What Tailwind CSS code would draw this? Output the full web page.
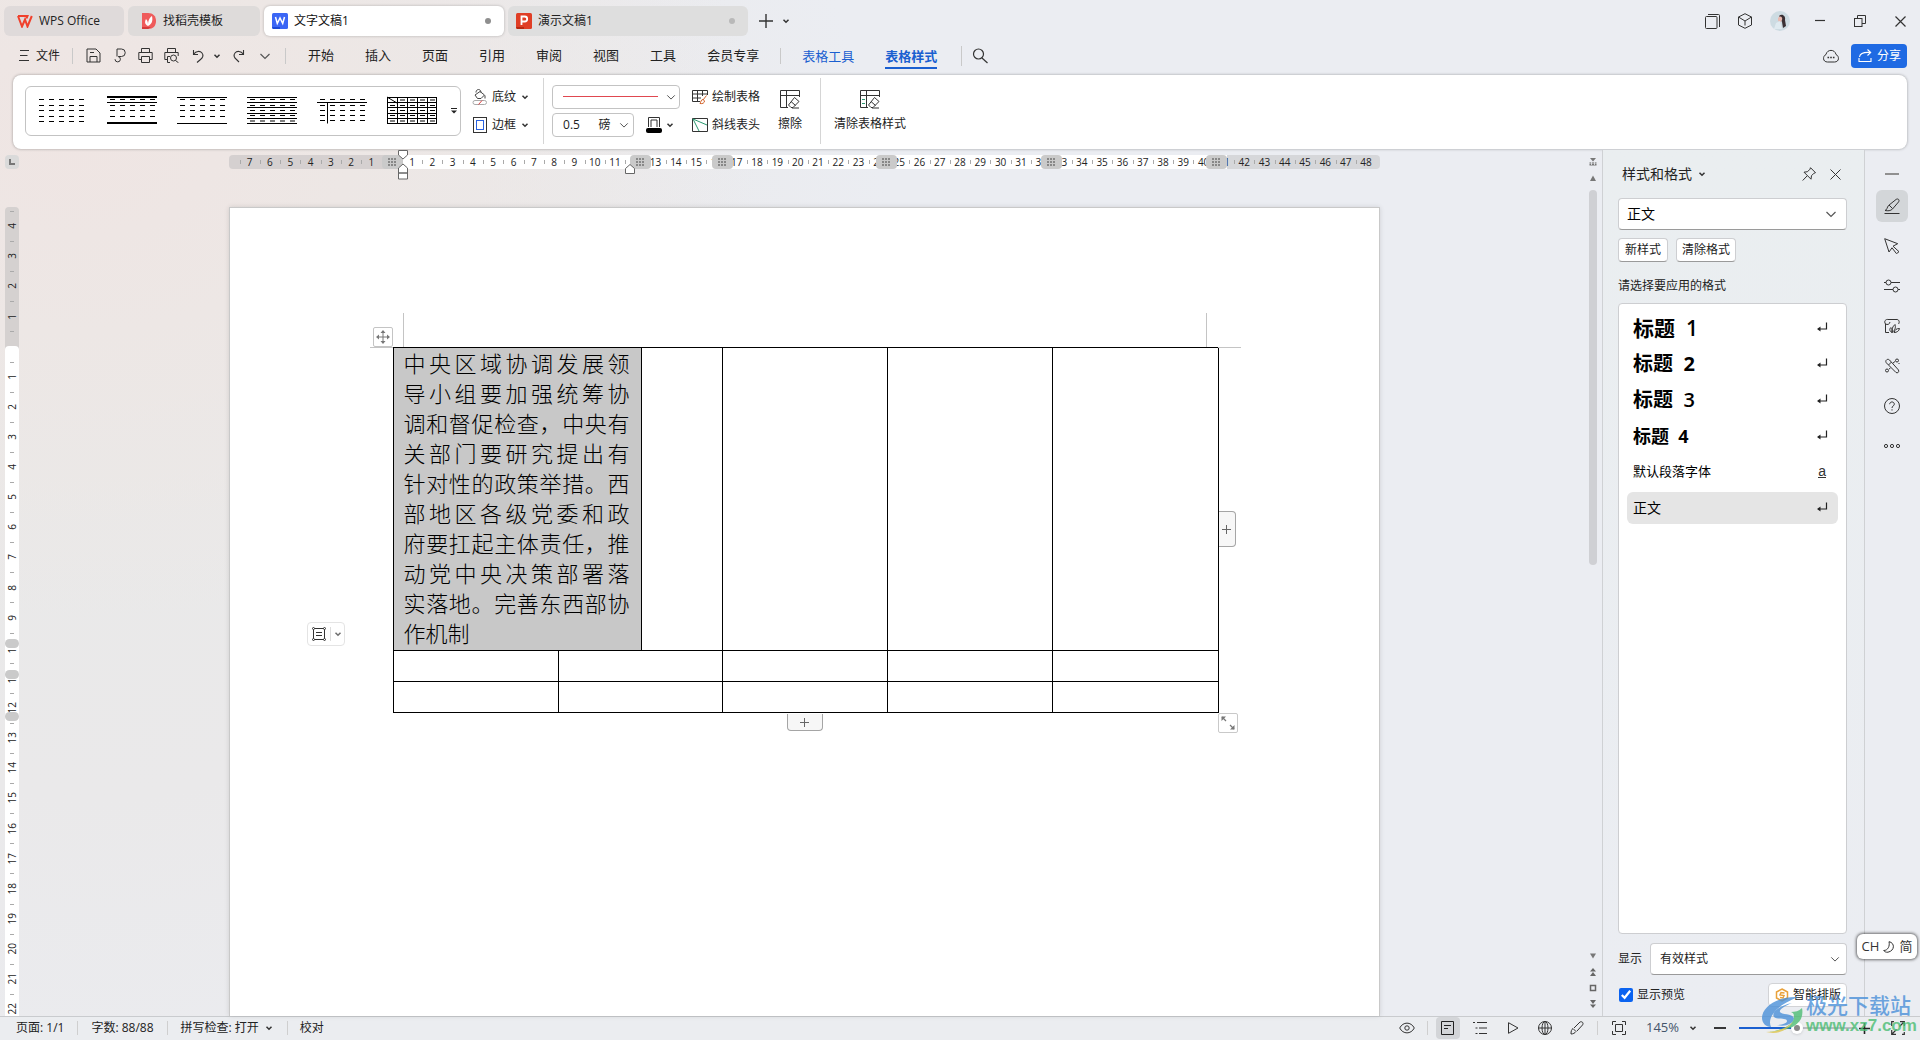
<!DOCTYPE html>
<html lang="zh-CN">
<head>
<meta charset="utf-8">
<title>文字文稿1 - WPS Office</title>
<script src="https://cdn.jsdelivr.net/npm/@tailwindcss/browser@4"></script>
</head>
<body class="relative flex h-screen flex-col overflow-hidden bg-[#ebedf2] bg-[radial-gradient(ellipse_680px_480px_at_80px_140px,#efe5e3_0%,#ede7e5_40%,transparent_100%),radial-gradient(ellipse_800px_900px_at_100px_350px,#e9e9e8_0%,#eae9ea_50%,transparent_100%)] font-['Open_Sans','Noto_Sans_CJK_SC',sans-serif] text-xs text-[#222]">

<svg class="hidden" aria-hidden="true">
  <symbol id="caret" viewBox="0 0 8 8"><path d="M1.500 2.800 4 5.300 6.500 2.800" fill="none" stroke="#333" stroke-width="1.500"/></symbol>
  <symbol id="chev" viewBox="0 0 12 12"><path d="M1.500 4 6 8.500 10.500 4" fill="none" stroke="#555" stroke-width="1.200"/></symbol>
  <symbol id="ret" viewBox="0 0 12 12"><path d="M10.500 .5v6.500H2" fill="none" stroke="#222" stroke-width="1.200"/><path d="M4.500 4.500v5L1 7z" fill="#222"/></symbol>
  <symbol id="grip" viewBox="0 0 10 10"><path d="M2 1v8M5 1v8M8 1v8" stroke="#888" stroke-width="2" stroke-dasharray="2 1" fill="none"/></symbol>
</svg>

<!-- window tabs -->
<header class="flex h-[42px] shrink-0 items-center pl-1">
  <div class="flex gap-1">
    <button class="flex h-[30px] w-[120px] items-center gap-[6px] rounded-md bg-[#dfdada] pl-[13px]">
      <svg class="h-[13px] w-4" viewBox="0 0 16 13"><path d="M1 1h9.500l-1 2.500M1 1l4 10.500L8 4.500l2.500 7L14.800 1" fill="none" stroke="#f0402c" stroke-width="2"/></svg>
      <span>WPS Office</span>
    </button>
    <button class="flex h-[30px] w-[132px] items-center gap-[7px] rounded-md bg-[#dedbda] pl-[14px]">
      <svg class="h-4 w-[14px]" viewBox="0 0 14 16"><path d="M0 0h6c5 0 8 3 8 8s-3 8-8 8H0z" fill="#ef5b5b"/><path d="M0 14h9l-3 2H0z" fill="#d53a3a"/><path d="M6 13c-4-2-3-5-2-7 2 2 2 4 2 7zm0 0c0-5 1-8 4-10 1 5 0 8-4 10z" fill="#fff"/></svg>
      <span>找稻壳模板</span>
    </button>
    <button class="flex h-[30px] w-[240px] items-center gap-[6px] rounded-md bg-white pl-2 shadow-[0_0_3px_rgba(0,0,0,0.25)]">
      <svg class="size-4" viewBox="0 0 16 16"><rect width="16" height="16" rx="1.500" fill="#3b66f5"/><path d="M0 14h8v2H1z" fill="#1c49d6"/><path d="M3.500 4l1.800 6.500L8 5l2.700 5.500L12.500 4" fill="none" stroke="#fff" stroke-width="1.500"/></svg>
      <span class="flex-1 text-left text-[#111]">文字文稿1</span>
      <span class="mr-[13px] size-[6px] rounded-full bg-[#8e8e8e]"></span>
    </button>
    <button class="flex h-[30px] w-[240px] items-center gap-[6px] rounded-md bg-[#dedede] pl-2">
      <svg class="size-4" viewBox="0 0 16 16"><rect width="16" height="16" rx="1.500" fill="#e03e25"/><path d="M0 14h8v2H1z" fill="#b52a12"/><path d="M5.500 12V3.500h3.200a2.300 2.300 0 0 1 0 5H5.500" fill="none" stroke="#fff" stroke-width="1.800"/></svg>
      <span class="flex-1 text-left">演示文稿1</span>
      <span class="mr-[13px] size-[6px] rounded-full bg-[#b9b9b9]"></span>
    </button>
  </div>
  <button class="ml-[11px] flex size-[14px]" aria-label="新建"><svg viewBox="0 0 14 14"><path d="M7 0v14M0 7h14" stroke="#333" stroke-width="1.400"/></svg></button>
  <button class="ml-[9px] flex size-2" aria-label="新建选项"><svg viewBox="0 0 8 8"><use href="#caret"/></svg></button>
  <div class="ml-auto flex items-center pr-[14px]">
    <button class="mr-[17px]" aria-label="窗口"><svg class="size-[15px]" viewBox="0 0 15 15" fill="none" stroke="#333"><rect x=".5" y="2.500" width="11.500" height="12" rx="1"/><path d="M3 .5h10.500a1 1 0 0 1 1 1V13"/></svg></button>
    <button class="mr-[17px]" aria-label="应用"><svg class="size-4" viewBox="0 0 16 16" fill="none" stroke="#333"><path d="M8 .7 14.500 4v8L8 15.300 1.500 12V4zM1.500 4 8 8l6.500-4M8 8v4.500"/></svg></button>
    <button class="mr-[25px]" aria-label="账号"><svg class="size-5" viewBox="0 0 20 20"><circle cx="10" cy="10" r="10" fill="#cddbe2"/><path d="M9 5c3-3 7 0 6 4l1 6-3 2-1-6z" fill="#3a3034"/><path d="M8 7c2-3 5-1 4 2s-4 2-4 0z" fill="#e8b9b0"/><path d="M4 18l2-6 4-2 2 8z" fill="#dfeaf0"/></svg></button>
    <button class="mr-[29px]" aria-label="最小化"><svg class="h-3 w-[10px]" viewBox="0 0 10 12"><path d="M0 5.500h10" stroke="#333" stroke-width="1.200"/></svg></button>
    <button class="mr-[29px]" aria-label="还原"><svg class="size-[12px]" viewBox="0 0 12 12" fill="none" stroke="#333"><rect x=".5" y="3.500" width="7.500" height="8"/><path d="M3.500 3.500v-3h8v8H8"/></svg></button>
    <button aria-label="关闭"><svg class="size-[11px]" viewBox="0 0 11 11"><path d="M.5.5l10 10M10.500.5l-10 10" stroke="#333" stroke-width="1.200"/></svg></button>
  </div>
</header>

<!-- menu row -->
<div class="flex h-7 shrink-0 items-center pr-[13px] pb-px pl-[19px]">
  <button class="flex items-center gap-[7px]"><svg class="h-[11px] w-[10px]" viewBox="0 0 10 11"><path d="M1 .5h9M1 5.500h7.500M0 10.500h10" stroke="#333"/></svg>文件</button>
  <span class="ml-3 h-4 w-px bg-[#c9c9c9]"></span>
  <div class="ml-[7px] flex items-center">
    <button class="flex w-[26px] justify-center" aria-label="保存"><svg class="size-[15px]" viewBox="0 0 15 15" fill="none" stroke="#333"><path d="M1 1h9l4 4v9H1zM4 14V8.500h7V14M4 4.500h4"/></svg></button>
    <button class="flex w-[26px] justify-center" aria-label="输出"><svg class="size-[15px]" viewBox="0 0 15 15" fill="none" stroke="#333"><path d="M5 8.500V1h4.500a3.700 3.700 0 0 1 0 7.500H6.500M6 8.500a2.700 2.700 0 1 1-3 2.700"/></svg></button>
    <button class="flex w-[26px] justify-center" aria-label="打印"><svg class="size-[15px]" viewBox="0 0 15 15" fill="none" stroke="#333"><path d="M3.500 4.500v-4h8v4M3.500 11.500H.8v-7h13.400v7h-2.700"/><path d="M3.500 8.500h8v6h-8z"/></svg></button>
    <button class="flex w-[26px] justify-center" aria-label="打印预览"><svg class="size-[15px]" viewBox="0 0 15 15" fill="none" stroke="#333"><path d="M3.500 4.500v-4h8v4M3.500 11.500H.8v-7h13.400V8M6 14.500H3.500v-6H6"/><circle cx="9.500" cy="10" r="3"/><path d="M11.500 12.500l3 2.300"/></svg></button>
    <button class="flex w-[28px] justify-center" aria-label="撤销"><svg class="size-[14px]" viewBox="0 0 14 14" fill="none" stroke="#333" stroke-width="1.100"><path d="M2.500 1v4.500H7M2.800 5C5 2 9 1.500 11 4s.5 5-1.500 6.500L6 13.500"/></svg></button>
    <button class="flex w-[10px] justify-center" aria-label="撤销选项"><svg class="size-2"><use href="#caret"/></svg></button>
    <button class="ml-1 flex w-[26px] justify-center" aria-label="恢复"><svg class="size-[14px]" viewBox="0 0 14 14" fill="none" stroke="#333" stroke-width="1.100"><path d="M11.500 1v4.500H7M11.200 5C9 2 5 1.500 3 4s-.5 5 1.500 6.500L7 13"/></svg></button>
    <button class="flex w-[26px] justify-center" aria-label="更多"><svg class="size-[12px]"><use href="#chev"/></svg></button>
  </div>
  <span class="ml-[7px] h-4 w-px bg-[#c9c9c9]"></span>
  <nav class="ml-[22px] flex items-center gap-[31px] text-[13px]">
    <a href="#">开始</a><a href="#">插入</a><a href="#">页面</a><a href="#">引用</a><a href="#">审阅</a><a href="#">视图</a><a href="#">工具</a><a href="#">会员专享</a>
  </nav>
  <span class="ml-[21px] h-4 w-px bg-[#c9c9c9]"></span>
  <nav class="ml-[21px] flex items-center gap-[31px] text-[13px] leading-[22px] text-[#1a5fd0]">
    <a href="#" class="border-y-2 border-transparent">表格工具</a>
    <a href="#" class="border-y-2 border-t-transparent border-b-[#1a5fd0] font-bold">表格样式</a>
  </nav>
  <span class="ml-6 h-5 w-px bg-[#c9c9c9]"></span>
  <button class="ml-[10px]" aria-label="搜索"><svg class="size-4" viewBox="0 0 16 16" fill="none" stroke="#333" stroke-width="1.200"><circle cx="6.500" cy="6" r="5"/><path d="M10 10l5.500 5"/></svg></button>
  <button class="mr-3 ml-auto" aria-label="云"><svg class="h-[14px] w-4" viewBox="0 0 16 14"><path d="M4.500 13C-.5 13-.5 7 3 5.500 4 0 12 0 13 5.500 16.500 7 16.500 13 11.500 13z" fill="none" stroke="#333"/><path d="M4.500 8.500h1.600M7.200 8.500h1.600M9.900 8.500h1.600" stroke="#333" stroke-width="1.600"/></svg></button>
  <button class="flex h-6 w-14 items-center gap-[5px] rounded bg-[#1f6ae3] pl-[7px] text-white"><svg class="size-[14px] shrink-0" viewBox="0 0 14 14" fill="none" stroke="#fff" stroke-width="1.100"><path d="M1 9v3.500h12V9M1.500 8C2 4.500 6 3 12.500 3.500M9.500.5l3.200 3-3.200 3"/></svg>分享</button>
</div>

<!-- ribbon -->
<section class="mx-[13px] mt-[5px] flex h-[74px] shrink-0 items-center rounded-lg bg-white pb-[3px] pl-3 shadow-[0_0_3px_rgba(0,0,0,0.35)]">
  <div class="flex h-[50px] w-[436px] items-center rounded-md border border-[#c3c3c3] pl-[10px]">
    <div class="flex gap-[18px]">
      <button aria-label="样式 1"><svg class="h-[29px] w-[52px]" viewBox="0 0 52 29"><path d="M3 3.500h46M3 9.500h46M3 14.500h46M3 20.500h46M3 25.500h46" stroke="#000" stroke-dasharray="5 5" stroke-width="1.200"/></svg></button>
      <button aria-label="样式 2"><svg class="h-[29px] w-[52px]" viewBox="0 0 52 29"><path d="M4 3.500h46M4 9.500h46M4 14.500h46M4 20.500h46" stroke="#000" stroke-dasharray="5 5" stroke-width="1.200"/><path d="M1 1h50M1 27h50" stroke="#000" stroke-width="2"/><path d="M1 6.500h50" stroke="#000"/></svg></button>
      <button aria-label="样式 3"><svg class="h-[29px] w-[52px]" viewBox="0 0 52 29"><path d="M4 3.500h46M4 9.500h46M4 14.500h46M4 20.500h46" stroke="#000" stroke-dasharray="5 5" stroke-width="1.200"/><path d="M1 1.500h50M1 27.500h50" stroke="#000"/></svg></button>
      <button aria-label="样式 4"><svg class="h-[29px] w-[52px]" viewBox="0 0 52 29"><path d="M4 3.500h46M4 9.500h46M4 14.500h46M4 19.500h46M4 25h46" stroke="#000" stroke-dasharray="5 5" stroke-width="1.200"/><path d="M1 1.500h50M1 6.500h50M1 11.500h50M1 17.500h50M1 22.500h50M1 27.500h50" stroke="#000"/></svg></button>
      <button aria-label="样式 5"><svg class="h-[29px] w-[52px]" viewBox="0 0 52 29"><path d="M4 3.500h46M4 9.500h46M4 14.500h46M4 19.500h46M4 24.500h46" stroke="#000" stroke-dasharray="5 5" stroke-width="1.200"/><path d="M1 6.500h50M11.500 6.500v21" stroke="#000"/></svg></button>
      <button aria-label="样式 6"><svg class="h-[29px] w-[52px]" viewBox="0 0 52 29"><path d="M14 4h36M4 9.500h46M4 14.500h46M4 19.500h46M4 25h46" stroke="#000" stroke-dasharray="5 5" stroke-width="1.200"/><path d="M1 1.500h50M1 6.500h50M1 11.500h50M1 17.500h50M1 22.500h50M1 27.500h50M1.500 1v27M11.500 1v27M21.500 1v27M31.500 1v27M41.500 1v27M50.500 1v27M1 1l10 6" fill="none" stroke="#000"/></svg></button>
    </div>
    <button class="ml-[13px]" aria-label="更多样式"><svg class="size-[6px]" viewBox="0 0 6 6"><path d="M0 .5h6" stroke="#222"/><path d="M0 2.500h6L3 5.500z" fill="#222"/></svg></button>
  </div>
  <div class="ml-[11px] flex flex-col gap-2">
    <button class="flex h-5 items-center gap-1"><svg class="size-4" viewBox="0 0 16 16" fill="none" stroke="#444"><path d="M4 3.500c0-4 5-4 5 0M3 6l5-3.500L12.500 6 9 9.500H5.500zM13 6.500v3"/><rect x="1" y="11.500" width="13.500" height="4" rx="2" stroke="#aaa"/><path d="M6.500 15.500l3.500-4" stroke="#e04040"/></svg>底纹<svg class="ml-px size-2"><use href="#caret"/></svg></button>
    <button class="flex h-5 items-center gap-1"><svg class="size-4" viewBox="0 0 16 16" fill="none"><rect x="1.500" y=".5" width="13" height="15" stroke="#333"/><rect x="4.500" y="3.500" width="7" height="9" stroke="#2a62e0"/></svg>边框<svg class="ml-px size-2"><use href="#caret"/></svg></button>
  </div>
  <span class="ml-[14px] h-[66px] w-px bg-[#d5d5d5]"></span>
  <div class="ml-2 flex flex-col gap-1">
    <button class="flex h-6 w-32 items-center justify-between rounded border border-[#c3c3c3] pr-[3px] pl-[10px]" aria-label="线型"><span class="h-px w-[95px] bg-[#e04850]"></span><svg class="size-[10px]" viewBox="0 0 12 12"><use href="#chev"/></svg></button>
    <div class="flex items-center">
      <label class="relative flex h-6 w-[82px] items-center rounded border border-[#c3c3c3]">
        <select class="h-full w-full appearance-none pl-[10px] outline-none" aria-label="线宽"><option>0.5 &nbsp; &nbsp; &nbsp;磅</option></select>
        <svg class="pointer-events-none absolute right-1 size-[10px]" viewBox="0 0 12 12"><use href="#chev"/></svg>
      </label>
      <button class="ml-3 flex items-center gap-1" aria-label="边框颜色"><svg class="size-4" viewBox="0 0 16 16"><path d="M2.500 10V.5h11V10M5 10V3h6v7" fill="none" stroke="#333"/><rect y="11" width="16" height="5" rx="2"/></svg><svg class="size-2"><use href="#caret"/></svg></button>
    </div>
  </div>
  <div class="ml-3 flex flex-col gap-2">
    <button class="flex h-5 items-center gap-1"><svg class="size-4" viewBox="0 0 16 16" fill="none" stroke="#333"><path d="M8 12.500H.5v-11h15V6M.5 5h15M.5 9H9M5.500 1.500v11M10.500 1.500V7"/><path d="M14.500 6.500L11 11M11 10.500c-2 0-2 2.500-3 4 2.500.5 4.500-.5 4.500-2.500z" stroke="#d2622a"/></svg>绘制表格</button>
    <button class="flex h-5 items-center gap-1"><svg class="size-4" viewBox="0 0 16 16" fill="none"><path d="M8 1.500H.5v13h15V1.500H8" stroke="#333"/><path d="M1 2l14 6M1 2l6 12" stroke="#2a9a70"/></svg>斜线表头</button>
  </div>
  <button class="ml-[18px] flex flex-col items-center gap-[7px]"><svg class="size-5" viewBox="0 0 20 20" fill="none" stroke="#333"><path d="M8 18.500H.5v-17h19V8M.5 6.500h19M6.500 1.500v17"/><path d="M14.500 8.500l4.500 4-6 6H11l-2.500-2.500zM11 12.500l4.500 4M12 19h7"/></svg>擦除</button>
  <span class="ml-[18px] h-[66px] w-px bg-[#d5d5d5]"></span>
  <button class="ml-[13px] flex flex-col items-center gap-[7px]"><svg class="size-5" viewBox="0 0 20 20" fill="none" stroke="#333"><path d="M8 18.500H.5v-17h19V8M.5 6.500h19M6.500 1.500v17"/><path d="M2 10.500h3M2 14.500h3" stroke="#2a9a70"/><path d="M14.500 8.500l4.500 4-6 6H11l-2.500-2.500zM11 12.500l4.500 4M12 19h7"/></svg>清除表格样式</button>
</section>

<!-- workspace -->
<main class="mt-px flex min-h-0 flex-1">
  <div class="flex w-6 shrink-0 flex-col pt-[5px] pl-[5px]">
    <div class="flex size-[14px] items-center justify-center rounded bg-[#dadada]"><span class="size-[6px] border-b-2 border-l-2 border-[#777]"></span></div>
    <div class="relative mt-[38px] min-h-0 w-[14px] flex-1 overflow-hidden rounded-t bg-[#d5d1d0] text-[10px]">
      <div class="absolute top-[139px] h-full w-full rounded-t bg-white"></div>
      <div id="vruler" class="relative mt-1 flex h-[813px] flex-col"></div>
      <div class="absolute top-[432px] h-[9px] w-full rounded-full bg-[#cacaca]"></div>
      <div class="absolute top-[463px] h-[9px] w-full rounded-full bg-[#cacaca]"></div>
      <div class="absolute top-[505px] h-[9px] w-full rounded-full bg-[#cacaca]"></div>
    </div>
  </div>

  <div class="flex min-w-0 flex-1 flex-col items-center pt-[5px]">
    <div class="relative mb-[38px] h-[14px] w-[1151px] shrink-0 rounded bg-[linear-gradient(90deg,#d5d0d0_0,#d5d0d0_174px,#fff_174px,#fff_998px,#d6d7da_998px)] text-[10px]">
      <div id="hruler" class="flex h-full pr-[3px] pl-[11px]"></div>
      <div class="absolute top-0 left-[153px] flex h-[14px] w-[21px] items-center justify-center rounded bg-[#cacaca]"><svg class="size-[10px]"><use href="#grip"/></svg></div>
      <div class="absolute top-0 left-[401px] flex h-[14px] w-[21px] items-center justify-center rounded bg-[#cacaca]"><svg class="size-[10px]"><use href="#grip"/></svg></div>
      <div class="absolute top-0 left-[483px] flex h-[14px] w-[21px] items-center justify-center rounded bg-[#cacaca]"><svg class="size-[10px]"><use href="#grip"/></svg></div>
      <div class="absolute top-0 left-[647px] flex h-[14px] w-[21px] items-center justify-center rounded bg-[#cacaca]"><svg class="size-[10px]"><use href="#grip"/></svg></div>
      <div class="absolute top-0 left-[812px] flex h-[14px] w-[21px] items-center justify-center rounded bg-[#cacaca]"><svg class="size-[10px]"><use href="#grip"/></svg></div>
      <div class="absolute top-0 left-[977px] flex h-[14px] w-[21px] items-center justify-center rounded bg-[#cacaca]"><svg class="size-[10px]"><use href="#grip"/></svg></div>
      <svg class="absolute -top-[5px] left-[169px] h-[30px] w-[10px]" viewBox="0 0 10 30" fill="#fff" stroke="#666"><path d="M.5.500h9V5L5 9 .5 5zM5 14l4.500 4v5H.5v-5zM.5 23h9v6h-9z"/></svg>
      <svg class="absolute top-[9px] left-[396px] h-[10px] w-[10px]" viewBox="0 0 10 10" fill="#fff" stroke="#666"><path d="M5 .5l4.500 4v5H.5v-5z"/></svg>
    </div>

    <article class="relative min-h-0 w-[1151px] flex-1 border border-b-0 border-[#c9c9c9] bg-white pt-[139px] pl-[163px] shadow-[0_0_5px_rgba(0,0,0,0.12)]">
      <div class="relative w-[825px]">
        <table class="w-full table-fixed border-collapse">
          <colgroup><col class="w-[165px]"><col class="w-[83px]"><col class="w-[81px]"><col class="w-[165px]"><col class="w-[165px]"><col class="w-[166px]"></colgroup>
          <tbody>
            <tr class="h-[303px]">
              <td colspan="2" class="border border-black bg-[#c8c8c8] pr-[11px] pl-[10px] align-top text-[22px] leading-[30px] font-light text-black">
                <p class="[text-align-last:justify]">中央区域协调发展领<br>导小组要加强统筹协<br>调和督促检查，中央有<br>关部门要研究提出有<br>针对性的政策举措。西<br>部地区各级党委和政<br>府要扛起主体责任，推<br>动党中央决策部署落<br>实落地。完善东西部协</p>
                <p>作机制</p>
              </td>
              <td class="border border-black"></td><td class="border border-black"></td><td class="border border-black"></td><td class="border border-black"></td>
            </tr>
            <tr class="h-[31px]"><td class="border border-black"></td><td colspan="2" class="border border-black"></td><td class="border border-black"></td><td class="border border-black"></td><td class="border border-black"></td></tr>
            <tr class="h-[31px]"><td class="border border-black"></td><td colspan="2" class="border border-black"></td><td class="border border-black"></td><td class="border border-black"></td><td class="border border-black"></td></tr>
          </tbody>
        </table>
        <!-- margin marks and table handles -->
        <span class="absolute -top-[34px] left-[10px] h-[34px] w-px bg-[#c4c4c4]"></span>
        <span class="absolute top-0 -left-[23px] h-px w-[23px] bg-[#c4c4c4]"></span>
        <span class="absolute -top-[34px] right-[11px] h-[34px] w-px bg-[#c4c4c4]"></span>
        <span class="absolute top-0 -right-[23px] h-px w-[23px] bg-[#c4c4c4]"></span>
        <button class="absolute -top-5 -left-5 flex size-5 items-center justify-center rounded-xs border border-[#c4c4c4] bg-white" aria-label="移动表格"><svg class="size-[14px]" viewBox="0 0 14 14"><path d="M7 1v12M1 7h12" stroke="#777"/><path d="M7 0l2.500 3h-5zM7 14l2.500-3h-5zM0 7l3-2.500v5zM14 7l-3-2.500v5z" fill="#777"/></svg></button>
        <button class="absolute top-[164px] -right-[18px] flex h-9 w-[17px] items-center justify-center rounded-r border border-l-0 border-[#a5a5a5] bg-[#f7f7f7]" aria-label="添加列"><svg class="size-[9px]" viewBox="0 0 9 9"><path d="M4.500 0v9M0 4.500h9" stroke="#666"/></svg></button>
        <button class="absolute -bottom-[18px] left-[394px] flex h-[17px] w-9 items-center justify-center rounded-b border border-t-0 border-[#a5a5a5] bg-[#f7f7f7]" aria-label="添加行"><svg class="size-[9px]" viewBox="0 0 9 9"><path d="M4.500 0v9M0 4.500h9" stroke="#666"/></svg></button>
        <button class="absolute -right-5 -bottom-5 flex size-5 items-center justify-center rounded-xs border border-[#c9c9c9] bg-white" aria-label="缩放表格"><svg class="size-[14px]" viewBox="0 0 14 14"><path d="M1 1l4 4M9 9l4 4" stroke="#777" stroke-width="1.200"/><path d="M.5.500H5l-4.500 4.500zM13.500 13.500H9l4.500-4.500z" fill="#777"/></svg></button>
        <button class="absolute top-[275px] -left-[86px] flex h-6 w-[38px] items-center rounded border border-[#e4e4e4] bg-white pl-1" aria-label="布局选项"><svg class="size-[14px]" viewBox="0 0 14 14" fill="none" stroke="#333"><path d="M1.500 1.500h11v11h-11zM4 5.500h6M4 8.500h6"/><g fill="#fff"><circle cx="1.500" cy="1.500" r="1"/><circle cx="12.500" cy="1.500" r="1"/><circle cx="1.500" cy="12.500" r="1"/><circle cx="12.500" cy="12.500" r="1"/></g></svg><span class="ml-[4px] h-[14px] w-px bg-[#ddd]"></span><svg class="ml-[3px] size-2 opacity-70"><use href="#caret"/></svg></button>
      </div>
    </article>
  </div>

  <!-- vertical scrollbar -->
  <div class="flex w-[18px] shrink-0 flex-col items-center pt-2">
    <svg class="size-2" viewBox="0 0 8 8"><path d="M1 0h6L4 3.500zM.5 4v3.500h7V4" fill="#777"/><path d="M0 5h8M2.500 4v3M5.500 4v3" stroke="#ebedf2" stroke-width=".8"/></svg>
    <svg class="mt-2 size-[8px]" viewBox="0 0 8 8"><path d="M4 1.500 7 7H1z" fill="#777"/></svg>
    <div class="mt-2 h-[375px] w-2 rounded-full bg-[#cfd0d4]"></div>
    <div class="mt-auto flex flex-col gap-2 pb-2">
      <svg class="size-2" viewBox="0 0 8 8"><path d="M1 1.500h6L4 6.500z" fill="#777"/></svg>
      <svg class="size-2" viewBox="0 0 8 8"><path d="M4 0l3 3.500H1zM4 4l3 4H1z" fill="#666"/></svg>
      <svg class="size-2" viewBox="0 0 8 8"><rect x="1.500" y="1.500" width="5" height="5" fill="none" stroke="#666" stroke-width="1.500"/></svg>
      <svg class="size-2" viewBox="0 0 8 8"><path d="M1 0h6L4 4zM1 4.500h6L4 8z" fill="#666"/></svg>
    </div>
  </div>

  <!-- style panel -->
  <aside class="flex w-[262px] shrink-0 flex-col border-l border-[#cfd1d4] bg-gradient-to-b from-[#eaeef0] to-[#ebedf2] pr-[17px] pl-[15px]">
    <div class="mt-[13px] flex h-[22px] items-center pl-1 text-sm"><h2>样式和格式</h2><svg class="ml-[6px] size-2"><use href="#caret"/></svg>
      <button class="mr-[14px] ml-auto" aria-label="固定"><svg class="size-[14px]" viewBox="0 0 14 14" fill="none" stroke="#333"><path d="M8.500.700l5 5-1.500.500-2.500 2.500-.5 3.500-7-7 3.500-.5L8 2.200zM5 9 .7 13.500"/></svg></button>
      <button class="mr-[6px]" aria-label="关闭窗格"><svg class="size-[11px]" viewBox="0 0 11 11"><path d="M.5.500l10 10M10.500.500l-10 10" stroke="#333"/></svg></button></div>
    <label class="relative mt-[13px] flex h-8 items-center rounded border border-[#cdced1] border-b-[#9a9a9a] bg-white">
      <select class="h-full w-full appearance-none pl-2 text-sm text-black outline-none" aria-label="当前样式"><option>正文</option></select>
      <svg class="pointer-events-none absolute right-[9px] size-[12px]"><use href="#chev"/></svg>
    </label>
    <div class="mt-2 flex gap-2">
      <button class="h-6 w-[50px] rounded border border-[#cdced1] border-b-[#9a9a9a] bg-white">新样式</button>
      <button class="h-6 w-[60px] rounded border border-[#cdced1] border-b-[#9a9a9a] bg-white">清除格式</button>
    </div>
    <p class="mt-4 leading-4">请选择要应用的格式</p>
    <ul class="mt-[9px] flex min-h-0 flex-1 flex-col gap-1 rounded border border-[#cdced1] bg-white px-2 pt-2 text-black">
      <li class="flex h-8 items-center justify-between pr-[10px] pl-[6px] text-[21px] font-semibold"><span class="whitespace-pre">标题  1</span><svg class="size-3"><use href="#ret"/></svg></li>
      <li class="flex h-8 items-center justify-between pr-[10px] pl-[6px] text-[20px] font-bold"><span class="whitespace-pre">标题  2</span><svg class="size-3"><use href="#ret"/></svg></li>
      <li class="flex h-8 items-center justify-between pr-[10px] pl-[6px] text-[20px] font-semibold"><span class="whitespace-pre">标题  3</span><svg class="size-3"><use href="#ret"/></svg></li>
      <li class="flex h-8 items-center justify-between pr-[10px] pl-[6px] text-[18px] font-bold"><span class="whitespace-pre">标题  4</span><svg class="size-3"><use href="#ret"/></svg></li>
      <li class="flex h-8 items-center justify-between pr-[12px] pl-[6px] text-[13px]"><span>默认段落字体</span><span class="border-b border-[#333] font-['Liberation_Sans',sans-serif] text-sm leading-[11px] text-[#333]">a</span></li>
      <li class="flex h-8 items-center justify-between rounded-md bg-[#e5e5e5] pr-[10px] pl-[6px] text-sm"><span>正文</span><svg class="size-3"><use href="#ret"/></svg></li>
    </ul>
    <div class="mt-[9px] flex items-center gap-2">
      <label for="show">显示</label>
      <div class="relative flex h-8 flex-1 items-center rounded border border-[#cdced1] border-b-[#9a9a9a] bg-white">
        <select id="show" class="h-full w-full appearance-none pl-[9px] outline-none"><option>有效样式</option></select>
        <svg class="pointer-events-none absolute right-[6px] size-[10px]" viewBox="0 0 12 12"><use href="#chev"/></svg>
      </div>
    </div>
    <div class="mt-2 mb-[9px] flex items-center justify-between">
      <label class="flex items-center gap-1 pl-px"><input type="checkbox" checked class="size-[14px] accent-[#0b63f0]">显示预览</label>
      <button class="flex h-6 w-[79px] items-center gap-1 rounded border border-[#d2d3d6] bg-white pl-[6px] whitespace-nowrap"><svg class="size-[14px] shrink-0" viewBox="0 0 14 14" fill="none" stroke="#e9a23b" stroke-width="1.500"><path d="M7 1l5.500 3v6L7 13l-5.500-3V4z"/><path d="M9.500 5L6 4.500 5 7l4 .5-1 2.500-3-.5"/></svg>智能排版</button>
    </div>
  </aside>

  <!-- side rail -->
  <div class="flex w-14 shrink-0 flex-col items-center border-l border-[#cfd1d4] pt-2 pr-px">
    <button class="flex size-8 items-center justify-center" aria-label="收起"><span class="h-[2px] w-[14px] bg-[#909090]"></span></button>
    <div class="flex flex-col gap-2">
      <button class="flex size-8 items-center justify-center rounded-md bg-[#d3d6d9]" aria-label="样式"><svg class="size-4" viewBox="0 0 16 16" fill="none" stroke="#333"><path d="M.5 15.500h15M1 12.500c2-.5 2-3 3.500-5L12 1.500c2-1.500 4 .5 2.500 2.500L8.500 11c-2 2-4.500 2-7.500 1.500zM5 7l3.500 3.500"/></svg></button>
      <button class="flex size-8 items-center justify-center" aria-label="选择"><svg class="size-4" viewBox="0 0 16 16" fill="none" stroke="#333"><path d="M.7.700l13 5-4.700 2.500 6 5.500-2.500 2L8 9.800 5 14z"/></svg></button>
      <button class="flex size-8 items-center justify-center" aria-label="属性"><svg class="size-4" viewBox="0 0 16 16" fill="none" stroke="#333"><circle cx="4.500" cy="4.500" r="2.500"/><circle cx="11.500" cy="11.500" r="2.500"/><path d="M0 4.500h2M7 4.500h9M0 11.500h9M14 11.500h2"/></svg></button>
      <button class="flex size-8 items-center justify-center" aria-label="素材"><svg class="size-4" viewBox="0 0 16 16" fill="none" stroke="#333"><path d="M5 14.500H1.500V6C-.5 3 2 1 4 1.500h8c3-.5 4 2.500 2.500 4.500M1.500 6c2 1 4 .5 4.500-2"/><path d="M8 14.500c-3-1.500-2.500-4-1-5 1.500 1.500 1.500 3 1 5zm0 0c-.5-3 .5-6 3-8 1 3 0 6-3 8zm2 0c1-3 2.500-4 5.500-4-.5 2.500-2.500 4-5.500 4z"/></svg></button>
      <button class="flex size-8 items-center justify-center" aria-label="工具"><svg class="size-4" viewBox="0 0 16 16" fill="none" stroke="#333"><path d="M2 2.500c1-1.500 2.500-1.500 3.500-.5l9 10c1 2-1 3.500-2.500 2.500l-9.500-9.500c-.8-.8-.8-1.800-.5-2.500zM4.500 7l3-3"/><circle cx="13" cy="2.500" r="1.500"/><circle cx="3" cy="12.500" r="1.500"/><path d="M9 5l2-1.500M5 11l1.500-1M15 5v1"/></svg></button>
      <button class="flex size-8 items-center justify-center" aria-label="帮助"><svg class="size-4" viewBox="0 0 16 16" fill="none" stroke="#333"><circle cx="8" cy="8" r="7.500"/><path d="M5.700 6.200c0-3 4.600-3 4.600 0C10.300 8 8 7.800 8 10M8 11.300v1.200"/></svg></button>
      <button class="flex size-8 items-center justify-center" aria-label="更多"><svg class="h-4 w-[18px]" viewBox="0 0 18 16" fill="none" stroke="#333"><circle cx="3" cy="8" r="1.600"/><circle cx="9" cy="8" r="1.600"/><circle cx="15" cy="8" r="1.600"/></svg></button>
    </div>
  </div>
</main>

<!-- status bar -->
<footer class="flex h-6 shrink-0 items-center border-t border-[#c9cbce] bg-[#ebedf0] pr-[15px] pb-px pl-4">
  <button>页面: 1/1</button>
  <span class="mx-[13px] h-[14px] w-px bg-[#cfcfcf]"></span>
  <button>字数: 88/88</button>
  <span class="mx-[13px] h-[14px] w-px bg-[#cfcfcf]"></span>
  <button class="flex items-center gap-[6px]">拼写检查: 打开<svg class="size-2"><use href="#caret"/></svg></button>
  <span class="mr-3 ml-[14px] h-[14px] w-px bg-[#cfcfcf]"></span>
  <button>校对</button>
  <div class="ml-auto flex items-center">
    <button aria-label="护眼"><svg class="h-3 w-4" viewBox="0 0 16 12" fill="none" stroke="#333"><path d="M.7 6C4-.5 12-.5 15.300 6 12 12.500 4 12.500.700 6z"/><circle cx="8" cy="6" r="2.200"/></svg></button>
    <span class="mr-2 ml-3 h-[14px] w-px bg-[#cfcfcf]"></span>
    <button class="flex h-[22px] w-6 items-center justify-center rounded bg-[#d3d5d8]" aria-label="页面视图"><svg class="h-[14px] w-[13px]" viewBox="0 0 13 14" fill="none" stroke="#222"><path d="M.5.500h12v13H.5zM3 4.500h7M3 7.500h4"/></svg></button>
    <button class="ml-[13px]" aria-label="大纲"><svg class="h-3 w-[14px]" viewBox="0 0 14 12" stroke="#333"><path d="M0 .5h2M4 .5h10M2.500 6h2M6 6h8M2.500 11.500h2M6 11.500h8"/></svg></button>
    <button class="ml-[20px]" aria-label="阅读"><svg class="size-3" viewBox="0 0 12 12" fill="none" stroke="#333"><path d="M1.500.700l9.500 5.300-9.500 5.300z"/></svg></button>
    <button class="ml-[19px]" aria-label="网页"><svg class="size-[14px]" viewBox="0 0 14 14" fill="none" stroke="#333"><circle cx="7" cy="7" r="6.500"/><ellipse cx="7" cy="7" rx="3" ry="6.500"/><path d="M.5 7h13M7 .5v13"/></svg></button>
    <button class="ml-[18px]" aria-label="写作"><svg class="size-[14px]" viewBox="0 0 14 14" fill="none" stroke="#333"><path d="M1 13c0-3 .5-4.500 2-5.500l3 3C5 12 3 13 1 13zM4 7l6-6c2-1 4 1 2.500 3L7 10"/></svg></button>
    <span class="ml-[13px] h-[14px] w-px bg-[#cfcfcf]"></span>
    <button class="ml-[14px]" aria-label="适应"><svg class="size-[14px]" viewBox="0 0 14 14" fill="none" stroke="#333"><path d="M.5 4V.5H4M10 .5h3.500V4M13.500 10v3.500H10M4 13.500H.5V10M3.500 3.500h7v7h-7z"/></svg></button>
    <button class="ml-5 flex items-center gap-[10px] text-[#44546a]"><span class="text-[13px]">145%</span><svg class="size-2"><use href="#caret"/></svg></button>
    <button class="ml-[17px]" aria-label="缩小"><svg class="size-3" viewBox="0 0 12 12"><path d="M0 6h12" stroke="#222" stroke-width="1.800"/></svg></button>
    <label class="relative ml-[13px] flex h-4 w-[116px] items-center">
      <input type="range" min="0" max="100" value="50" aria-label="缩放" class="absolute inset-0 opacity-0">
      <span class="h-[2px] w-1/2 bg-[#1a5fd0]"></span><span class="h-[2px] w-1/2 bg-[#b8bcc4]"></span>
      <span class="absolute left-[52px] flex size-[12px] items-center justify-center rounded-full bg-white shadow"><span class="size-[6px] rounded-full bg-[#888]"></span></span>
    </label>
    <button class="ml-1" aria-label="放大"><svg class="size-[11px]" viewBox="0 0 11 11"><path d="M0 5.500h11M5.500 0v11" stroke="#222" stroke-width="1.600"/></svg></button>
    <button class="ml-[21px]" aria-label="全屏"><svg class="size-[14px]" viewBox="0 0 14 14" fill="none" stroke="#333" stroke-width="1.200"><path d="M9 .7h4.300V5M5 13.300H.7V9M13 1L8.500 5.500M1 13l4.500-4.500M.7 5V.7H3M11 13.300h2.300V11"/></svg></button>
  </div>
</footer>

<!-- input method indicator -->
<div class="absolute right-[3px] bottom-[81px] flex h-[25px] w-[60px] items-center justify-center gap-1 rounded-md bg-white text-[13px] text-[#333] shadow-[0_0_3px_1px_rgba(0,0,0,0.55)]"><span>CH</span><svg class="size-3" viewBox="0 0 12 12"><path d="M6 .700c6 1 6 9-1 10.500-2 .3-3.500-.5-4.300-1.700C5 9.500 7 5 6 .7z" fill="none" stroke="#333"/></svg><span>简</span></div>

<!-- site mark -->
<div class="pointer-events-none absolute right-[10px] bottom-1 flex items-center gap-px opacity-80">
  <svg class="h-[42px] w-[44px]" viewBox="0 0 44 42"><path d="M37 3C18 2 1 12 1 24c0 5 4 9 9 9-4-9 4-21 27-30z" fill="#4a90d9"/><path d="M31 9C17 12 10 19 13 23c3 3 13 0 13 4 0 2-4 4-10 4 8 2 16-1 17-6 0-6-13-4-14-7-1-2 4-6 12-9z" fill="#4a90d9"/><path d="M41 14c3 15-10 23-33 24 13-2 24-7 25-14 0-3 0-5-3-6 4 0 8-1 11-4z" fill="#4dbd74"/><path d="M5 38c10 0 20-3 27-10-5 7-12 11-20 11z" fill="#e0c64b"/></svg>
  <div class="flex w-[104px] flex-col whitespace-nowrap">
    <span class="text-[21px] leading-[22px] font-medium text-[#4a90d9]">极光下载站</span>
    <span class="font-['Liberation_Sans',sans-serif] text-[17px] leading-5 font-bold text-[#4dbd74]">www.xz7.com</span>
  </div>
</div>

<script>
  const h = document.getElementById('hruler');
  for (let i = -7; i <= 48; i++) {
    h.insertAdjacentHTML('beforeend', `<div class="relative flex min-w-0 flex-1 items-center justify-center leading-[14px]"><span class="absolute top-[5px] left-0 h-1 w-px bg-[#aaa]"></span>${i ? Math.abs(i) : ''}</div>`);
  }
  const v = document.getElementById('vruler');
  for (let i = -4; i <= 22; i++) {
    v.insertAdjacentHTML('beforeend', `<div class="relative flex min-h-0 flex-1 items-center justify-center"><span class="absolute top-0 left-[5px] h-px w-1 bg-[#aaa]"></span><span class="rotate-180 leading-[14px] [writing-mode:vertical-rl]">${i ? Math.abs(i) : ''}</span></div>`);
  }
</script>
</body>
</html>
